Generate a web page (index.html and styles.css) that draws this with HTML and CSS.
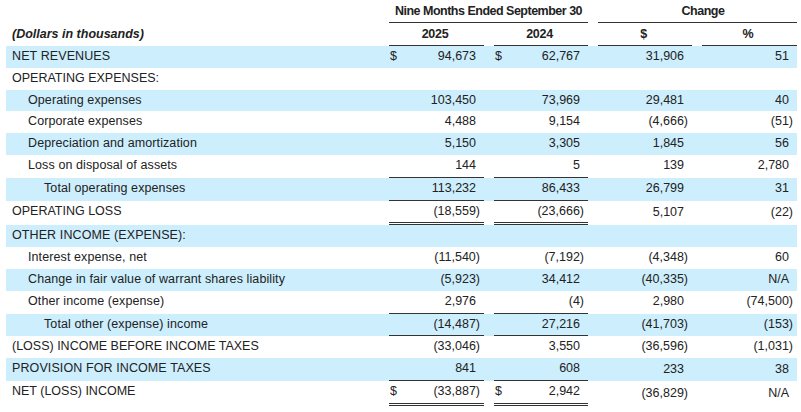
FILE: index.html
```html
<!DOCTYPE html>
<html>
<head>
<meta charset="utf-8">
<link rel="stylesheet" href="styles.css">
</head>
<body>
<div class="fin">
  <div class="row head1">
    <div class="lbl"></div>
    <div class="grp">Nine Months Ended September 30</div>
    <div class="grp chg">Change</div>
  </div>
  <div class="row head2">
    <div class="lbl unit">(Dollars in thousands)</div>
    <div class="hc">2025</div>
    <div class="hc">2024</div>
    <div class="hc">$</div>
    <div class="hc">%</div>
  </div>

  <div class="row blue">
    <div class="lbl">NET REVENUES</div>
    <div class="num"><span class="cur">$</span><span>94,673</span></div>
    <div class="num"><span class="cur">$</span><span>62,767</span></div>
    <div class="num"><span>31,906</span></div>
    <div class="num"><span>51</span></div>
  </div>
  <div class="row">
    <div class="lbl">OPERATING EXPENSES:</div>
    <div class="num"></div><div class="num"></div><div class="num"></div><div class="num"></div>
  </div>
  <div class="row blue">
    <div class="lbl l1">Operating expenses</div>
    <div class="num"><span>103,450</span></div>
    <div class="num"><span>73,969</span></div>
    <div class="num"><span>29,481</span></div>
    <div class="num"><span>40</span></div>
  </div>
  <div class="row">
    <div class="lbl l1">Corporate expenses</div>
    <div class="num"><span>4,488</span></div>
    <div class="num"><span>9,154</span></div>
    <div class="num"><span class="neg">(4,666)</span></div>
    <div class="num"><span class="neg">(51)</span></div>
  </div>
  <div class="row blue">
    <div class="lbl l1">Depreciation and amortization</div>
    <div class="num"><span>5,150</span></div>
    <div class="num"><span>3,305</span></div>
    <div class="num"><span>1,845</span></div>
    <div class="num"><span>56</span></div>
  </div>
  <div class="row">
    <div class="lbl l1">Loss on disposal of assets</div>
    <div class="num rule"><span>144</span></div>
    <div class="num rule"><span>5</span></div>
    <div class="num"><span>139</span></div>
    <div class="num"><span>2,780</span></div>
  </div>
  <div class="row blue">
    <div class="lbl l2">Total operating expenses</div>
    <div class="num rule"><span>113,232</span></div>
    <div class="num rule"><span>86,433</span></div>
    <div class="num"><span>26,799</span></div>
    <div class="num"><span>31</span></div>
  </div>
  <div class="row">
    <div class="lbl">OPERATING LOSS</div>
    <div class="num dbl"><span class="neg">(18,559)</span></div>
    <div class="num dbl"><span class="neg">(23,666)</span></div>
    <div class="num"><span>5,107</span></div>
    <div class="num"><span class="neg">(22)</span></div>
  </div>
  <div class="row blue">
    <div class="lbl">OTHER INCOME (EXPENSE):</div>
    <div class="num"></div><div class="num"></div><div class="num"></div><div class="num"></div>
  </div>
  <div class="row">
    <div class="lbl l1">Interest expense, net</div>
    <div class="num"><span class="neg">(11,540)</span></div>
    <div class="num"><span class="neg">(7,192)</span></div>
    <div class="num"><span class="neg">(4,348)</span></div>
    <div class="num"><span>60</span></div>
  </div>
  <div class="row blue">
    <div class="lbl l1">Change in fair value of warrant shares liability</div>
    <div class="num"><span class="neg">(5,923)</span></div>
    <div class="num"><span>34,412</span></div>
    <div class="num"><span class="neg">(40,335)</span></div>
    <div class="num"><span>N/A</span></div>
  </div>
  <div class="row">
    <div class="lbl l1">Other income (expense)</div>
    <div class="num rule"><span>2,976</span></div>
    <div class="num rule"><span class="neg">(4)</span></div>
    <div class="num"><span>2,980</span></div>
    <div class="num"><span class="neg">(74,500)</span></div>
  </div>
  <div class="row blue">
    <div class="lbl l2">Total other (expense) income</div>
    <div class="num rule"><span class="neg">(14,487)</span></div>
    <div class="num rule"><span>27,216</span></div>
    <div class="num"><span class="neg">(41,703)</span></div>
    <div class="num"><span class="neg">(153)</span></div>
  </div>
  <div class="row">
    <div class="lbl">(LOSS) INCOME BEFORE INCOME TAXES</div>
    <div class="num"><span class="neg">(33,046)</span></div>
    <div class="num"><span>3,550</span></div>
    <div class="num"><span class="neg">(36,596)</span></div>
    <div class="num"><span class="neg">(1,031)</span></div>
  </div>
  <div class="row blue">
    <div class="lbl">PROVISION FOR INCOME TAXES</div>
    <div class="num rule"><span>841</span></div>
    <div class="num rule"><span>608</span></div>
    <div class="num"><span>233</span></div>
    <div class="num"><span>38</span></div>
  </div>
  <div class="row">
    <div class="lbl">NET (LOSS) INCOME</div>
    <div class="num dbl"><span class="cur">$</span><span class="neg">(33,887)</span></div>
    <div class="num dbl"><span class="cur">$</span><span>2,942</span></div>
    <div class="num low"><span class="neg">(36,829)</span></div>
    <div class="num low"><span>N/A</span></div>
  </div>
</div>
</body>
</html>
```
FILE: styles.css
```css
html, body {
  margin: 0;
  padding: 0;
  background: #ffffff;
}

body {
  font-family: "Liberation Sans", Arial, Helvetica, sans-serif;
  font-size: 12.5px;
  color: #222222;
}

.fin {
  width: 791px;
  margin-left: 6px;
}

.row {
  display: grid;
  grid-template-columns: 373px 95px 94px 94px 95px;
  column-gap: 10px;
}

.row.blue {
  background: #cdeefd;
}

.head1 {
  grid-template-columns: 373px 199px 199px;
  height: 23px;
}

.head1 .grp {
  font-weight: bold;
  letter-spacing: -0.5px;
  text-align: center;
  border-bottom: 1px solid #333333;
  line-height: 22px;
  white-space: nowrap;
}

.head1 .grp.chg {
  padding-left: 11px;
}

.head2 {
  height: 23px;
}

.head2 .hc {
  font-weight: bold;
  letter-spacing: -0.3px;
  text-align: center;
  border-bottom: 1px solid #333333;
  line-height: 22px;
  padding-right: 3px;
}

.unit {
  font-weight: bold;
  font-style: italic;
}

.lbl {
  padding-left: 6px;
  line-height: 21.8px;
  white-space: nowrap;
}

.head2 .lbl {
  line-height: 22px;
}

.row.blue .lbl,
.row .lbl.l1,
.row .lbl.l2 {
  letter-spacing: 0.1px;
}

.lbl.unit {
  letter-spacing: 0;
}

.lbl.l1 {
  padding-left: 22px;
}

.lbl.l2 {
  padding-left: 38px;
}

.num {
  display: flex;
  justify-content: flex-end;
  align-items: center;
  padding-left: 1px;
  padding-right: 8px;
  line-height: 21.8px;
  white-space: nowrap;
}

.num .cur {
  margin-right: auto;
}

.num .neg {
  margin-right: -4px;
}

.num.rule {
  border-bottom: 1px solid #333333;
}

.num.dbl {
  border-bottom: 3px double #333333;
}

.num.low {
  padding-top: 2px;
}
```
